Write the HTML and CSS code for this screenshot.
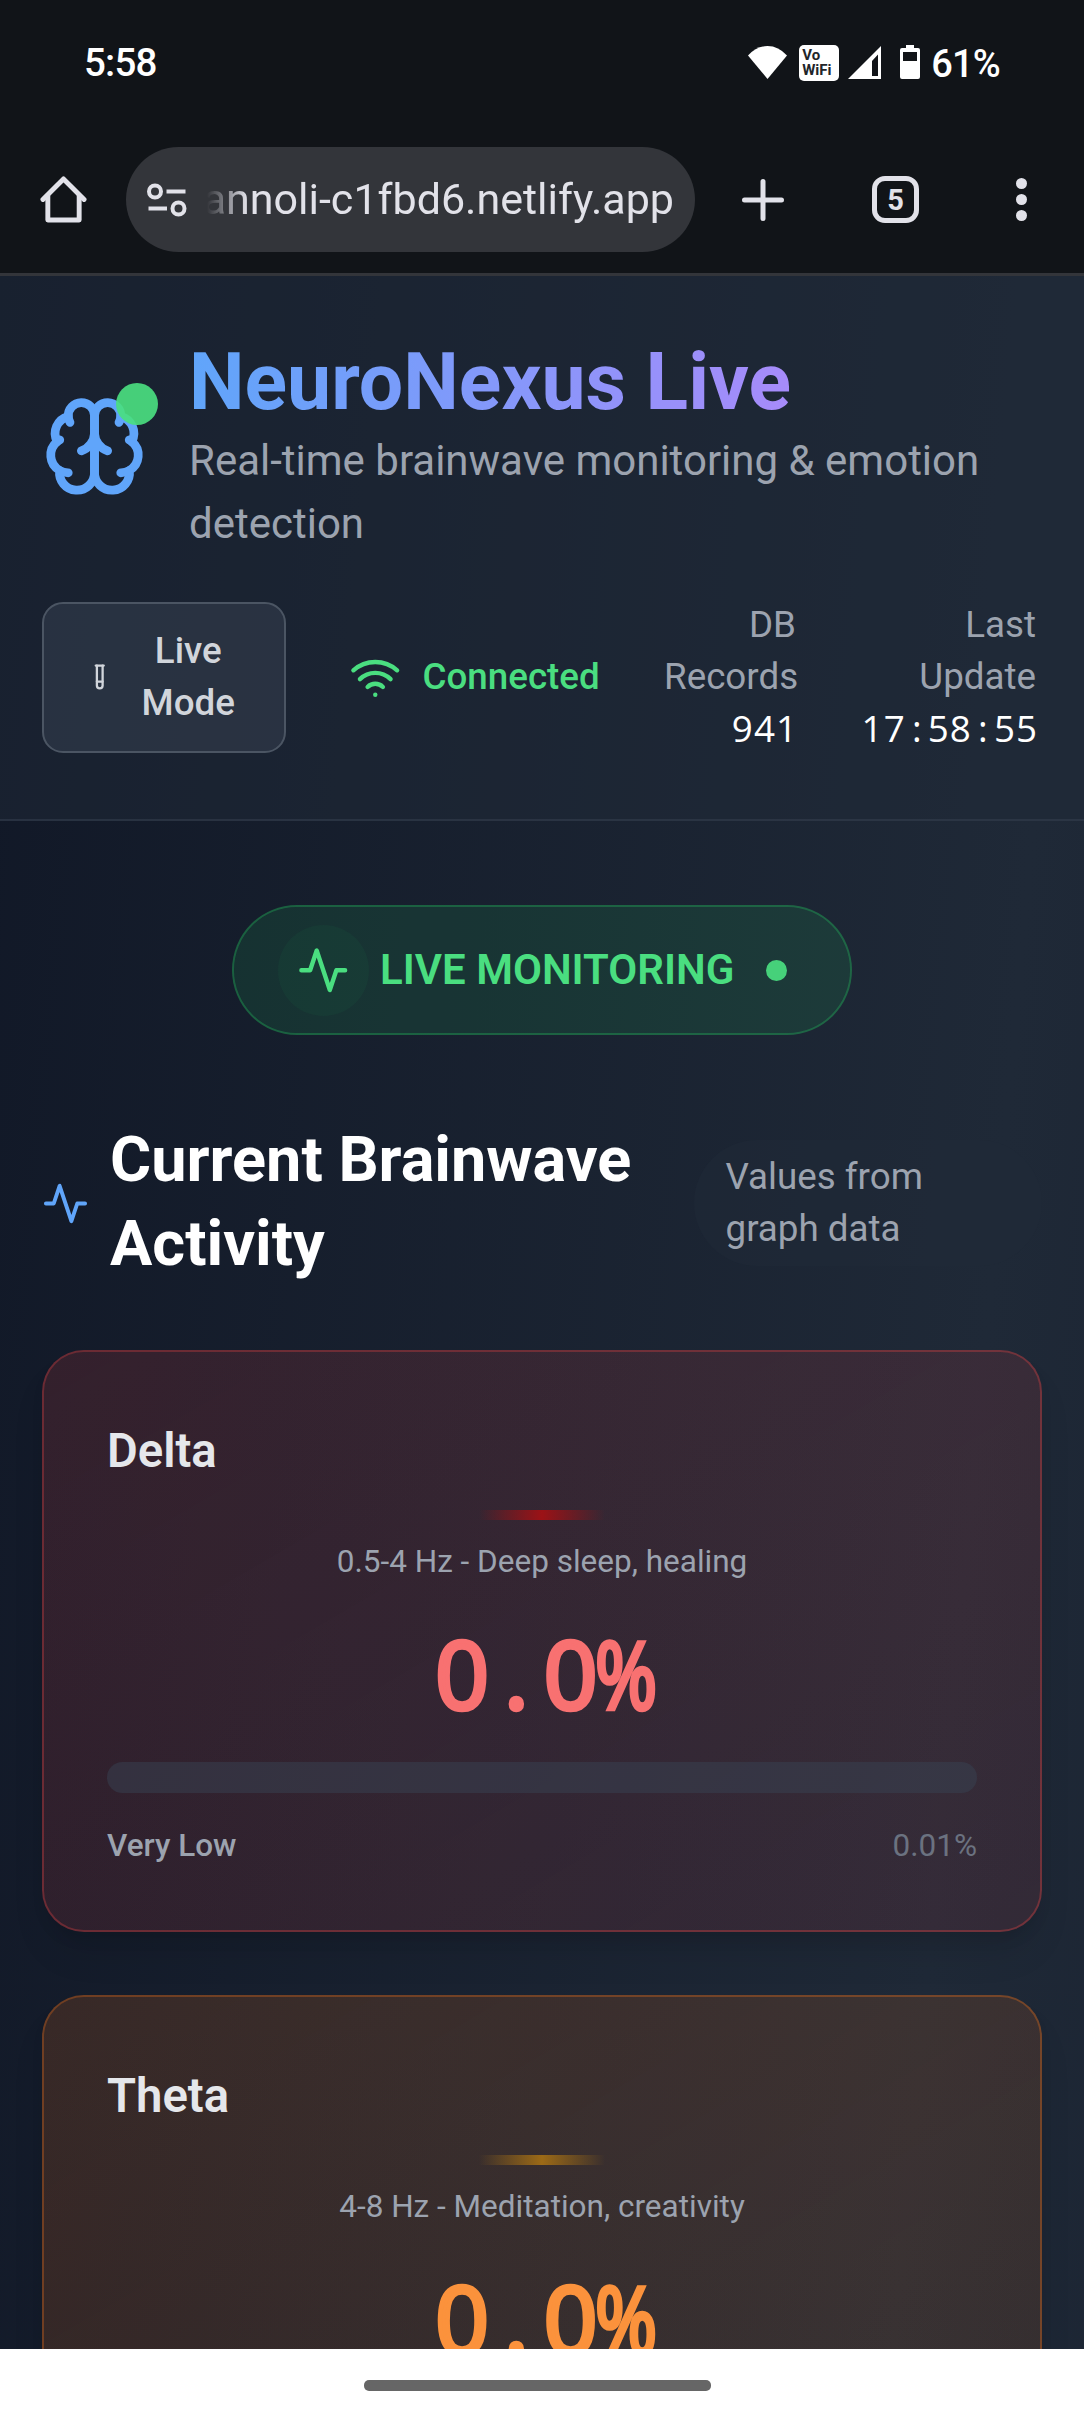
FILE: index.html
```html
<!DOCTYPE html>
<html lang="en">
<head>
<meta charset="utf-8">
<title>NeuroNexus Live</title>
<link rel="stylesheet" href="styles.css">
</head>
<body>
<div class="status-bar">
  <span class="clock">5:58</span>
  <div class="status-icons">
    <svg class="s-wifi" viewBox="0 0 39 33"><path d="M19.500 33 0 9.500Q8.500 0 19.500 0T39 9.500Z" fill="#fff"/></svg>
    <span class="vowifi"><span>Vo</span><span>WiFi</span></span>
    <svg class="s-signal" viewBox="0 0 33 33"><path fill="#fff" fill-rule="evenodd" d="M0 33 33 0V33ZM24 15V30H30V8.500Z"/></svg>
    <svg class="s-battery" viewBox="0 0 20 34"><path fill="#fff" fill-rule="evenodd" d="M6 0H14V3H18Q20 3 20 5V32Q20 34 18 34H2Q0 34 0 32V5Q0 3 2 3H6ZM3 7V16H17V7Z"/></svg>
    <span class="battery-level">61%</span>
  </div>
</div>
<div class="toolbar">
  <svg class="home" viewBox="0 0 48 48" fill="none" stroke="#e2e2e9" stroke-width="5" stroke-linecap="round" stroke-linejoin="round"><path d="M3 24 24 3 45 24"/><path d="M8 20V45H40V20" /></svg>
  <div class="omnibox">
    <svg class="tune" viewBox="0 0 40 34" fill="none" stroke="#e2e2e9" stroke-width="4"><circle cx="8" cy="8.500" r="6"/><path d="M19.500 8.500H38.500M1.500 25.500H20"/><circle cx="31.500" cy="25.500" r="6"/></svg>
    <div class="url"><span>annoli-c1fbd6.netlify.app</span></div>
  </div>
  <svg class="plus" viewBox="0 0 42 42" stroke="#e2e2e9" stroke-width="5" stroke-linecap="round"><path d="M21 2.500V39.500M2.500 21H39.500"/></svg>
  <div class="tabs">5</div>
  <div class="dots"><i></i><i></i><i></i></div>
</div>
<div class="viewport">
  <header class="header">
    <div class="brand">
      <div class="logo">
        <svg viewBox="0 0 24 24" class="icon"><path d="M12 5a3 3 0 1 0-5.997.125 4 4 0 0 0-2.526 5.770 4 4 0 0 0 .556 6.588A4 4 0 1 0 12 18Z"/><path d="M12 5a3 3 0 1 1 5.997.125 4 4 0 0 1 2.526 5.770 4 4 0 0 1-.556 6.588A4 4 0 1 1 12 18Z"/><path d="M15 13a4.500 4.500 0 0 1-3-4 4.500 4.500 0 0 1-3 4"/><path d="M17.599 6.500a3 3 0 0 0 .399-1.375"/><path d="M6.003 5.125A3 3 0 0 0 6.401 6.500"/><path d="M3.477 10.896a4 4 0 0 1 .585-.396"/><path d="M19.938 10.500a4 4 0 0 1 .585.396"/><path d="M6 18a4 4 0 0 1-1.967-.516"/><path d="M19.967 17.484A4 4 0 0 1 18 18"/></svg>
        <span class="logo-dot"></span>
      </div>
      <div class="brand-text">
        <h1>NeuroNexus Live</h1>
        <p class="tagline">Real-time brainwave monitoring &amp; emotion detection</p>
      </div>
    </div>
    <div class="controls">
      <div class="mode-button">
        <svg viewBox="0 0 24 24" class="icon"><path d="M14.500 2v17.500c0 1.400-1.100 2.500-2.500 2.500s-2.500-1.100-2.500-2.500V2"/><path d="M8.500 2h7"/><path d="M14.500 16h-5"/></svg>
        <span>Live Mode</span>
      </div>
      <div class="connection">
        <svg viewBox="0 0 24 24" class="icon"><path d="M12 20h.01"/><path d="M2 8.820a15 15 0 0 1 20 0"/><path d="M5 12.859a10 10 0 0 1 14 0"/><path d="M8.500 16.429a5 5 0 0 1 7 0"/></svg>
        <span>Connected</span>
      </div>
      <div class="stat records"><div class="stat-label">DB<br>Records</div><div class="mono">941</div></div>
      <div class="stat update"><div class="stat-label">Last<br>Update</div><div class="mono">17<b>:</b>58<b>:</b>55</div></div>
    </div>
  </header>
  <main>
    <div class="live-pill">
      <span class="live-icon"><svg viewBox="0 0 24 24" class="icon"><path d="M22 12h-4l-3 9L9 3l-3 9H2"/></svg></span>
      <span class="live-text">LIVE MONITORING</span>
      <span class="live-dot"></span>
    </div>
    <div class="section-head">
      <svg viewBox="0 0 24 24" class="icon"><path d="M22 12h-4l-3 9L9 3l-3 9H2"/></svg>
      <h2>Current Brainwave Activity</h2>
      <span class="source">Values from graph data</span>
    </div>
    <div class="cards">
      <section class="card delta">
        <h3>Delta</h3>
        <div class="accent"></div>
        <p class="range">0.5-4 Hz - Deep sleep, healing</p>
        <div class="value"><span>0</span><span>.</span><span>0</span><span class="pct">%</span></div>
        <div class="track"></div>
        <div class="level"><span>Very Low</span><span class="exact">0.01%</span></div>
      </section>
      <section class="card theta">
        <h3>Theta</h3>
        <div class="accent"></div>
        <p class="range">4-8 Hz - Meditation, creativity</p>
        <div class="value"><span>0</span><span>.</span><span>0</span><span class="pct">%</span></div>
        <div class="track"></div>
      </section>
    </div>
  </main>
</div>
<div class="nav-bar"><div class="handle"></div></div>
</body>
</html>
```
FILE: styles.css
```css
* { box-sizing: border-box; margin: 0; padding: 0; }
body {
  width: 1084px;
  height: 2412px;
  overflow: hidden;
  display: flex;
  flex-direction: column;
  background: #111418;
  font-family: Roboto, "Liberation Sans", sans-serif;
  color: #fff;
}
svg { display: block; flex: none; }
.icon { fill: none; stroke: currentColor; stroke-width: 2; stroke-linecap: round; stroke-linejoin: round; }

/* Phone status bar */
.status-bar { height: 126px; flex: none; display: flex; justify-content: space-between; padding: 0 84px 0 84px; font-weight: 500; }
.clock { font-size: 38.500px; line-height: 46px; margin-top: 40px; letter-spacing: -0.800px; }
.status-icons { display: flex; align-items: flex-start; padding-top: 45px; }
.s-wifi { width: 39px; height: 33px; margin: 1px 12px 0 0; }
.vowifi { width: 40px; height: 36px; border-radius: 5px; background: #fff; color: #222529; font-size: 15px; line-height: 15px; font-weight: 700; padding: 3px 0 0 3px; display: flex; flex-direction: column; margin-right: 9px; }
.s-signal { width: 33px; height: 33px; margin: 1px 19px 0 0; }
.s-battery { width: 20px; height: 34px; margin-right: 11px; }
.battery-level { font-size: 38px; line-height: 46px; margin-top: -4px; letter-spacing: -0.800px; }

/* Browser toolbar */
.toolbar { height: 147px; flex: none; display: flex; align-items: center; padding: 0 0 0 40px; }
.home { width: 47px; height: 47px; margin-right: 39px; }
.omnibox { width: 569px; height: 105px; border-radius: 53px; background: #33353a; display: flex; align-items: center; padding-left: 21px; margin-right: 47px; }
.tune { width: 40px; height: 34px; margin-right: 20px; }
.url { width: 467px; height: 60px; line-height: 58px; display: flex; justify-content: flex-end; overflow: hidden; font-size: 43px; color: #e2e2e9; white-space: nowrap; mask-image: linear-gradient(to right, transparent, #000 40px); }
.plus { width: 42px; height: 42px; margin-right: 88px; }
.tabs { width: 47px; height: 47px; border: 5px solid #e2e2e9; border-radius: 13px; color: #e2e2e9; font-size: 29px; font-weight: 700; line-height: 38px; text-align: center; margin-right: 97px; }
.dots { display: flex; flex-direction: column; gap: 5px; }
.dots i { width: 11px; height: 11px; border-radius: 50%; background: #e2e2e9; }

/* Page */
.viewport {
  height: 2076px;
  flex: none;
  overflow: hidden;
  background: linear-gradient(to bottom right, #111827, #1f2937, #111827) 0 0 / 100% 11800px;
}
.header { height: 548px; padding: 60px 42px 0; background: rgba(31, 41, 55, 0.5); border-top: 3px solid #33353a; border-bottom: 2px solid rgba(55, 65, 81, 0.5); }
.brand { display: flex; align-items: center; gap: 42px; height: 220.500px; margin-bottom: 42px; }
.brand-text { padding-bottom: 2px; }
.logo { position: relative; width: 105px; height: 105px; color: #60a5fa; flex: none; }
.logo .icon { width: 105px; height: 105px; }
.logo-dot { position: absolute; top: -10.500px; right: -10.500px; width: 42px; height: 42px; border-radius: 50%; background: #4ade80; opacity: 0.92; }
h1 { font-size: 78.750px; line-height: 94px; font-weight: 700; width: 602px; white-space: nowrap; color: transparent; background: linear-gradient(to right, #60a5fa, #a78bfa); background-clip: text; -webkit-background-clip: text; }
.tagline { font-size: 42px; line-height: 63px; color: #9ca3af; }
.controls { display: flex; align-items: center; gap: 63px; height: 157.500px; font-size: 36.750px; line-height: 52.500px; }
.mode-button { width: 244px; height: 151px; border: 2px solid #4b5563; border-radius: 21px; background: rgba(55, 65, 81, 0.5); color: #d1d5db; font-weight: 500; display: flex; align-items: center; padding: 0 42px; gap: 21px; }
.mode-button .icon { width: 27.500px; height: 42px; }
.mode-button span { flex: 1; text-align: center; width: 0; }
.connection { width: 252px; display: flex; align-items: center; gap: 21px; color: #4ade80; font-weight: 500; }
.connection .icon { width: 52.500px; height: 52.500px; }
.stat { text-align: right; }
.stat-label { color: #9ca3af; }
.records { width: 132px; }
.update { width: 177px; }
.mono { font-family: "Open Sans", "Noto Sans", sans-serif; letter-spacing: 1.040px; white-space: nowrap; margin: -2px -2px 2px 0; }
.mono b { font-weight: 400; letter-spacing: 0; display: inline-block; width: 22.050px; text-align: center; }

main { padding: 84px 42px 0; }
.live-pill { width: 620px; height: 130px; margin: 0 auto 84px; border: 2px solid rgba(34, 197, 94, 0.4); border-radius: 66px; background: rgba(34, 197, 94, 0.13) padding-box; color: #4ade80; display: flex; align-items: center; padding-left: 44px; }
.live-icon { width: 91px; height: 91px; border-radius: 50%; background: rgba(34, 197, 94, 0.05); display: flex; align-items: center; justify-content: center; margin-right: 11px; }
.live-icon .icon { width: 52.500px; height: 52.500px; }
.live-text { font-size: 42px; line-height: 63px; margin-top: -2px; font-weight: 600; width: 354px; white-space: nowrap; margin-right: 32px; }
.live-dot { width: 21px; height: 21px; border-radius: 50%; background: #4ade80; opacity: 0.92; }

.section-head { height: 168px; display: flex; align-items: center; margin-bottom: 63px; }
.section-head .icon { width: 47px; height: 47px; color: #60a5fa; margin-right: 21px; }
h2 { font-size: 63px; line-height: 84px; font-weight: 700; flex: 1; margin-top: -2px; }
.source { width: 348px; height: 126px; border-radius: 63px; padding: 10.500px 60px 10.500px 31.500px; background: rgba(31, 41, 55, 0.5); color: #9ca3af; font-size: 36.750px; line-height: 52.500px; }

.cards { display: flex; flex-direction: column; gap: 63px; }
.card { height: 582px; border: 2px solid; border-radius: 42px; padding: 63px; box-shadow: 0 26px 39px -8px rgba(0, 0, 0, 0.1), 0 10px 16px -5px rgba(0, 0, 0, 0.1); }
.delta { border-color: rgba(239, 68, 68, 0.4); background: linear-gradient(to bottom right, rgba(239, 68, 68, 0.15), rgba(239, 68, 68, 0.1)) padding-box; }
.theta { border-color: rgba(249, 115, 22, 0.4); background: linear-gradient(to bottom right, rgba(249, 115, 22, 0.16), rgba(249, 115, 22, 0.1)) padding-box; }
h3 { font-size: 47.250px; line-height: 72px; height: 73.500px; font-weight: 600; color: #e5e7eb; margin-bottom: 21px; }
.accent { width: 126px; height: 10.500px; margin: 0 auto 21px; }
.delta .accent { background: linear-gradient(to right, rgba(156, 18, 22, 0), #9c1216, rgba(156, 18, 22, 0)); }
.theta .accent { background: linear-gradient(to right, rgba(156, 106, 22, 0), #9c6a16, rgba(156, 106, 22, 0)); }
.range { font-size: 31.500px; line-height: 42px; color: #9ca3af; text-align: center; margin-bottom: 42px; }
.value { font-family: "Open Sans", "Noto Sans", sans-serif; font-size: 94px; line-height: 96px; height: 105px; display: flex; justify-content: center; padding-left: 3px; margin-bottom: 31.500px; -webkit-text-stroke: 4.500px currentColor; }
.value span { width: 54.300px; display: flex; justify-content: center; }
.value .pct { transform: translateX(1px) scaleX(0.8); }
.delta .value { color: #f87171; }
.theta .value { color: #fb923c; }
.track { height: 31.500px; border-radius: 16px; background: rgba(55, 65, 81, 0.5); margin-bottom: 31.500px; }
.level { display: flex; justify-content: space-between; font-size: 31.500px; line-height: 42px; font-weight: 500; color: #9ca3af; }
.exact { font-weight: 400; color: #6b7280; }

/* Gesture navigation */
.nav-bar { height: 63px; flex: none; background: #fff; }
.handle { width: 347px; height: 11px; border-radius: 5px; background: #666; margin: 31px 0 0 364px; }
```
